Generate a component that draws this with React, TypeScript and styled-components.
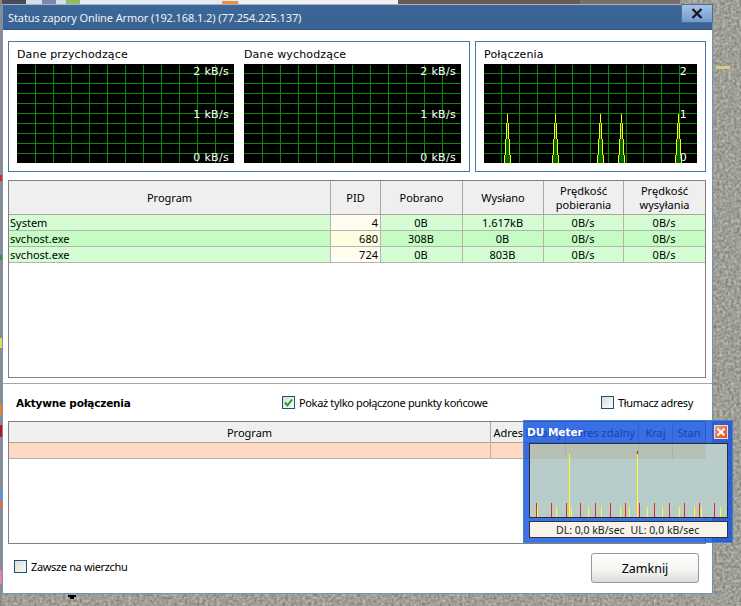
import React from 'react';
import styled, { createGlobalStyle } from 'styled-components';

const GlobalStyle = createGlobalStyle`
  html, body {
    margin: 0;
    padding: 0;
    background: #aeaea6;
  }
  * {
    box-sizing: border-box;
  }
`;

const Desktop = styled.div`
  position: relative;
  width: 741px;
  height: 606px;
  overflow: hidden;
  font-family: 'Noto Sans', 'Liberation Sans', sans-serif;
  font-size: 11px;
  color: #000;
`;

const Backdrop = styled.svg`
  position: absolute;
  inset: 0;
`;

const Window = styled.div`
  position: absolute;
  left: 2px;
  top: 4px;
  width: 711px;
  height: 590px;
  background: #fff;
  border: 1px solid #6f93bd;
  border-top-color: #9db4cc;
  display: flex;
  flex-direction: column;
`;

const TitleBar = styled.div`
  height: 25px;
  flex: none;
  padding-left: 5px;
  display: flex;
  align-items: center;
  background: linear-gradient(#3c6797, #386291);
  border-bottom: 1px solid #2f5787;
  color: #eef3f8;
  font-size: 11px;
  letter-spacing: -0.1px;
`;

const CloseButton = styled.div`
  position: absolute;
  right: -1px;
  top: -1px;
  width: 32px;
  height: 19px;
  display: flex;
  align-items: center;
  justify-content: center;
  background: linear-gradient(#a5c3e6, #6f9bd0);
  border: 1px solid #546d8a;
`;

const Body = styled.div`
  flex: 1;
  display: flex;
  flex-direction: column;
  padding-top: 11px;
`;

const GraphRow = styled.div`
  display: flex;
  gap: 5px;
  padding: 0 5px;
`;

const Panel = styled.div<{ $width: number }>`
  width: ${(p) => p.$width}px;
  height: 131px;
  padding: 0 8px;
  border: 1px solid #4a76a8;
  display: flex;
  gap: 10px;
`;

const GraphBlock = styled.div`
  display: flex;
  flex-direction: column;
`;

const GraphLabel = styled.div`
  height: 22px;
  padding-top: 6px;
  font-family: 'DejaVu Sans', sans-serif;
  font-size: 11px;
  line-height: 14px;
  letter-spacing: 0.15px;
`;

const GridTable = styled.div<{ $height: number }>`
  margin: 0 6px 0 5px;
  height: ${(p) => p.$height}px;
  border: 1px solid #808080;
  flex: none;
`;

const Row = styled.div<{ $cols: string; $height: number; $bg: string; $line: string }>`
  display: grid;
  grid-template-columns: ${(p) => p.$cols};
  height: ${(p) => p.$height}px;
  background: ${(p) => p.$bg};
  border-bottom: 1px solid ${(p) => p.$line};
`;

const HeadCell = styled.div`
  display: flex;
  align-items: center;
  justify-content: center;
  text-align: center;
  line-height: 14px;
  white-space: nowrap;
  overflow: hidden;
  border-right: 1px solid #a9a89f;
  &:last-child {
    border-right: 0;
  }
`;

const ConnHeadCell = styled(HeadCell)`
  padding-top: 2px;
`;

const Cell = styled.div<{ $align?: string; $bg?: string }>`
  padding: 0 2px 0 1px;
  line-height: 15px;
  text-align: ${(p) => p.$align || 'center'};
  background: ${(p) => p.$bg || 'transparent'};
  border-right: 1px solid #b4b4ac;
  white-space: nowrap;
  &:last-child {
    border-right: 0;
  }
`;

const Divider = styled.div`
  height: 1px;
  margin-top: 5px;
  background: #a8a898;
  flex: none;
`;

const ConnectionsBar = styled.div`
  height: 37px;
  flex: none;
  padding: 0 19px 0 13px;
  display: flex;
  align-items: center;
`;

const SectionTitle = styled.div`
  width: 266px;
  font-family: 'DejaVu Sans', sans-serif;
  font-size: 10.5px;
  font-weight: bold;
  letter-spacing: -0.2px;
`;

const CheckWrap = styled.label<{ $grow?: boolean }>`
  display: flex;
  align-items: center;
  gap: 4px;
  letter-spacing: -0.35px;
  flex: ${(p) => (p.$grow ? 1 : 'none')};
`;

const FooterCheck = styled(CheckWrap)`
  margin-top: 6px;
`;

const Box = styled.span`
  width: 13px;
  height: 13px;
  flex: none;
  display: flex;
  align-items: center;
  justify-content: center;
  border: 1px solid #1c5180;
  background: linear-gradient(135deg, #dcdcd6, #fbfbf9);
`;

const Footer = styled.div`
  flex: 1;
  padding: 9px 13px 0 11px;
  display: flex;
  align-items: flex-start;
  justify-content: space-between;
`;

const FooterButton = styled.div`
  width: 108px;
  height: 30px;
  display: flex;
  align-items: center;
  justify-content: center;
  font-size: 12.5px;
  border: 1px solid #999;
  border-radius: 3px;
  background: linear-gradient(#fff, #f3f3f1 60%, #dcdcd8);
`;

const Meter = styled.div`
  position: absolute;
  left: 523px;
  top: 420px;
  width: 210px;
  height: 123px;
  padding: 0 4px 0 5px;
  display: flex;
  flex-direction: column;
  background: rgba(18, 82, 224, 0.82);
  border: 1px solid #4d7fc4;
`;

const MeterTitle = styled.div`
  height: 22px;
  flex: none;
  display: flex;
  align-items: center;
  justify-content: space-between;
  margin-left: -2px;
  color: #fff;
  font-family: 'DejaVu Sans', sans-serif;
  font-size: 10.5px;
  font-weight: bold;
`;

const MeterClose = styled.div`
  width: 14px;
  height: 14px;
  display: flex;
  align-items: center;
  justify-content: center;
  background: linear-gradient(135deg, #f0a080, #dc4a26);
  border: 1px solid #f4ddd0;
`;

const MeterGraph = styled.svg`
  display: block;
  flex: none;
`;

const MeterStatus = styled.div`
  margin-top: 3px;
  height: 17px;
  padding-left: 26px;
  display: flex;
  align-items: center;
  gap: 6px;
  background: #f5f3ea;
  border: 1px solid #333;
  font-size: 10.5px;
  color: #222;
  white-space: nowrap;
`;

const GREEN = '#0a880a';

type GraphProps = {
  width: number;
  verticals: number[];
  labels: string[];
  labelX: number;
  spikes?: number[];
};

const Spike = ({ x }: { x: number }) => (
  <g shapeRendering="crispEdges">
    <rect x={x - 3} y={91} width={7} height={8} fill="#006400" />
    <rect x={x - 2} y={75} width={5} height={16} fill="#006400" />
    <rect x={x - 1} y={59} width={3} height={16} fill="#006400" />
    <rect x={x} y={50} width={1} height={9} fill="#ffff00" />
    <rect x={x - 1} y={59} width={1} height={16} fill="#ffff00" />
    <rect x={x + 1} y={59} width={1} height={16} fill="#ffff00" />
    <rect x={x - 2} y={75} width={1} height={16} fill="#ffff00" />
    <rect x={x + 2} y={75} width={1} height={16} fill="#ffff00" />
    <rect x={x - 3} y={91} width={1} height={8} fill="#ffff00" />
    <rect x={x + 3} y={91} width={1} height={8} fill="#ffff00" />
  </g>
);

const Graph = ({ width, verticals, labels, labelX, spikes = [] }: GraphProps) => (
  <svg width={width} height={99} style={{ display: 'block' }}>
    <rect width={width} height={99} fill="#000" />
    <g shapeRendering="crispEdges" fill={GREEN}>
      {verticals.map((v) => (
        <rect key={v} x={v} y={1} width={1} height={98} />
      ))}
      {[9, 19, 29, 39, 49, 59, 69, 79, 89].map((h) => (
        <rect key={h} x={0} y={h} width={width} height={1} />
      ))}
    </g>
    {spikes.map((s) => (
      <Spike key={s} x={s} />
    ))}
    <g fill="#fff" fontFamily="'DejaVu Sans', sans-serif" fontSize="11" letterSpacing="0.3" textAnchor="end">
      <text x={labelX} y={11}>{labels[0]}</text>
      <text x={labelX} y={54}>{labels[1]}</text>
      <text x={labelX} y={97}>{labels[2]}</text>
    </g>
  </svg>
);

const Check = () => (
  <svg width="11" height="11" viewBox="0 0 11 11">
    <path d="M2 5.5 L4.5 8.5 L9 2.5" fill="none" stroke="#1f9a2c" strokeWidth="2" />
  </svg>
);

const evenVerticals = [18, 36, 54, 72, 90, 108, 126, 144, 162, 180, 198];
const connVerticals = [17, 35, 53, 71, 88, 106, 124, 142, 159, 177, 195];

const rateLabels = ['2 kB/s', '1 kB/s', '0 kB/s'];

const programCols = '322px 50px 82px 81px 80px 81px';
const processes = [
  { name: 'System', pid: 4, down: '0B', up: '1.617kB', bg: '#d4fdd4', pidBg: '#fffdf0' },
  { name: 'svchost.exe', pid: 680, down: '308B', up: '0B', bg: '#c4fcc4', pidBg: '#fffde0' },
  { name: 'svchost.exe', pid: 724, down: '0B', up: '803B', bg: '#d4fdd4', pidBg: '#fffdf0' },
];

const connCols = '482px 75px 73px 34px 32px';

const redTicks = [7, 22, 37, 51, 66, 81, 96, 110, 125, 140, 155, 170, 185];
const yellowTicks = [8, 27, 42, 59, 72, 91, 100, 118, 133, 150, 165, 172, 191];
// table columns seen through the translucent meter
const bandLines = [36, 109, 143];

const App = () => (
  <Desktop>
    <GlobalStyle />
    <Backdrop width={741} height={606}>
      <filter id="grain">
        <feTurbulence type="fractalNoise" baseFrequency="0.35" numOctaves="3" seed="4" />
        <feColorMatrix values="0 0 0 0 0  0 0 0 0 0  0 0 0 0 0  0.9 0 0 0 -0.1" />
      </filter>
      <rect width={741} height={606} fill="#c4c4ba" />
      <rect width={741} height={606} filter="url(#grain)" opacity="0.55" />
      <g shapeRendering="crispEdges">
        <rect x={0} y={0} width={26} height={4} fill="#4a4a58" />
        <rect x={26} y={0} width={40} height={4} fill="#d6dce8" />
        <rect x={42} y={0} width={14} height={4} fill="#7c8aa8" />
        <rect x={66} y={0} width={14} height={4} fill="#8cc060" />
        <rect x={80} y={0} width={136} height={4} fill="#e6ecf4" />
        <rect x={216} y={0} width={24} height={4} fill="#e8e8f0" />
        <rect x={222} y={1} width={16} height={3} fill="#e89040" />
        <rect x={240} y={0} width={158} height={4} fill="#f0f0f0" />
        <rect x={398} y={0} width={182} height={4} fill="#6a5a52" />
        <rect x={580} y={0} width={100} height={4} fill="#7a6e66" />
        <rect x={0} y={0} width={2} height={606} fill="#8c8c90" />
        <rect x={0} y={175} width={2} height={6} fill="#e82020" />
        <rect x={0} y={255} width={2} height={5} fill="#2a9a30" />
        <rect x={0} y={338} width={2} height={10} fill="#e8d860" />
        <rect x={0} y={405} width={2} height={10} fill="#e88030" />
        <rect x={0} y={425} width={2} height={12} fill="#c01020" />
        <rect x={0} y={490} width={2} height={10} fill="#6090e0" />
        <rect x={0} y={500} width={2} height={8} fill="#e07030" />
        <rect x={0} y={570} width={2} height={14} fill="#f080a0" />
        <rect x={716} y={66} width={14} height={3} fill="#d8cc80" />
        <rect x={68} y={595} width={8} height={2} fill="#000" />
        <rect x={70} y={597} width={4} height={2} fill="#000" />
      </g>
    </Backdrop>

    <Window>
      <TitleBar>Status zapory Online Armor (192.168.1.2) (77.254.225.137)</TitleBar>
      <CloseButton>
        <svg width="12" height="11" viewBox="0 0 12 11">
          <path d="M1.5 1 L10.5 10 M10.5 1 L1.5 10" stroke="#1a1a24" strokeWidth="2.4" />
        </svg>
      </CloseButton>
      <Body>
        <GraphRow>
          <Panel $width={462}>
            <GraphBlock>
              <GraphLabel>Dane przychodzące</GraphLabel>
              <Graph width={217} verticals={evenVerticals} labels={rateLabels} labelX={212} />
            </GraphBlock>
            <GraphBlock>
              <GraphLabel>Dane wychodzące</GraphLabel>
              <Graph width={217} verticals={evenVerticals} labels={rateLabels} labelX={212} />
            </GraphBlock>
          </Panel>
          <Panel $width={231}>
            <GraphBlock>
              <GraphLabel>Połączenia</GraphLabel>
              <Graph
                width={213}
                verticals={connVerticals}
                labels={['2', '1', '0']}
                labelX={203}
                spikes={[23, 71, 116, 137, 194]}
              />
            </GraphBlock>
          </Panel>
        </GraphRow>

        <GridTable $height={198} style={{ marginTop: 8 }}>
          <Row $cols={programCols} $height={34} $bg="#efefef" $line="#a9a89f">
            <HeadCell>Program</HeadCell>
            <HeadCell>PID</HeadCell>
            <HeadCell>Pobrano</HeadCell>
            <HeadCell>Wysłano</HeadCell>
            <HeadCell>Prędkość<br />pobierania</HeadCell>
            <HeadCell>Prędkość<br />wysyłania</HeadCell>
          </Row>
          {processes.map((p) => (
            <Row key={p.pid} $cols={programCols} $height={16} $bg={p.bg} $line="#b4b4ac">
              <Cell $align="left">{p.name}</Cell>
              <Cell $align="right" $bg={p.pidBg}>{p.pid}</Cell>
              <Cell>{p.down}</Cell>
              <Cell>{p.up}</Cell>
              <Cell>0B/s</Cell>
              <Cell>0B/s</Cell>
            </Row>
          ))}
        </GridTable>

        <Divider />

        <ConnectionsBar>
          <SectionTitle>Aktywne połączenia</SectionTitle>
          <CheckWrap $grow>
            <Box><Check /></Box>
            Pokaż tylko połączone punkty końcowe
          </CheckWrap>
          <CheckWrap>
            <Box />
            Tłumacz adresy
          </CheckWrap>
        </ConnectionsBar>

        <GridTable $height={123}>
          <Row $cols={connCols} $height={21} $bg="#efefef" $line="#a9a89f">
            <ConnHeadCell>Program</ConnHeadCell>
            <ConnHeadCell>Adres lokalny</ConnHeadCell>
            <ConnHeadCell>Adres zdalny</ConnHeadCell>
            <ConnHeadCell>Kraj</ConnHeadCell>
            <ConnHeadCell>Stan</ConnHeadCell>
          </Row>
          <Row $cols={connCols} $height={16} $bg="#ffd9c2" $line="#b4b4ac">
            <Cell />
            <Cell />
            <Cell />
            <Cell />
            <Cell />
          </Row>
        </GridTable>

        <Footer>
          <FooterCheck>
            <Box />
            Zawsze na wierzchu
          </FooterCheck>
          <FooterButton>Zamknij</FooterButton>
        </Footer>
      </Body>
    </Window>

    <Meter>
      <MeterTitle>
        DU Meter
        <MeterClose>
          <svg width="10" height="10" viewBox="0 0 10 10">
            <path d="M1.5 1.5 L8.5 8.5 M8.5 1.5 L1.5 8.5" stroke="#fff" strokeWidth="2" />
          </svg>
        </MeterClose>
      </MeterTitle>
      <MeterGraph width={199} height={75}>
        <rect x={0.5} y={0.5} width={198} height={74} fill="#b8cdca" stroke="#2c2c2c" />
        <g shapeRendering="crispEdges">
          <rect x={1} y={1} width={176} height={15} fill="#b6c0b6" />
          {bandLines.map((x) => (
            <rect key={x} x={x} y={1} width={1} height={15} fill="#a9b4ac" />
          ))}
          {redTicks.map((x) => (
            <rect key={x} x={x} y={60} width={1} height={14} fill="#ee2222" />
          ))}
          {yellowTicks.map((x) => (
            <rect key={x} x={x} y={64} width={1} height={10} fill="#ffff22" />
          ))}
          <rect x={40} y={11} width={1} height={63} fill="#ffff22" />
          <rect x={108} y={11} width={1} height={63} fill="#ffff22" />
          <rect x={108} y={8} width={1} height={3} fill="#d81818" />
        </g>
      </MeterGraph>
      <MeterStatus>
        <span>DL: 0,0 kB/sec</span>
        <span>UL: 0,0 kB/sec</span>
      </MeterStatus>
    </Meter>
  </Desktop>
);

export default App;
